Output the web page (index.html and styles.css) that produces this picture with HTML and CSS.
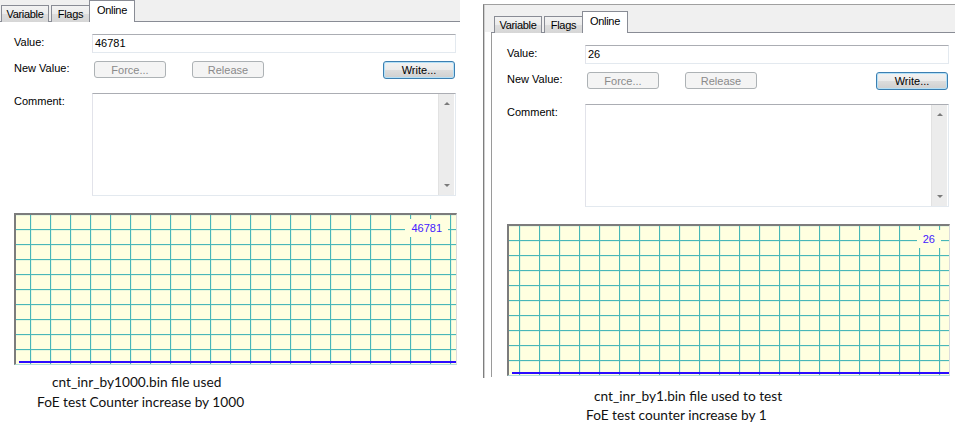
FILE: index.html
```html
<!DOCTYPE html>
<html>
<head>
<meta charset="utf-8">
<title>Online</title>
<link rel="stylesheet" href="styles.css">
</head>
<body>
<div class="page">
  <section class="col col-left">
    <div class="panel panel-cropped">
      <div class="tabstrip">
        <div class="tab tab-var">Variable</div>
        <div class="tab tab-flags">Flags</div>
        <div class="tab tab-online active">Online</div>
      </div>
      <div class="body">
        <div class="row row-value">
          <div class="lbl">Value:</div>
          <div class="field">46781</div>
        </div>
        <div class="row row-new">
          <div class="lbl">New Value:</div>
          <div class="btnrow">
            <button class="btn" disabled>Force...</button>
            <button class="btn btn-release" disabled>Release</button>
            <button class="btn btn-write">Write...</button>
          </div>
        </div>
        <div class="row row-comment">
          <div class="lbl">Comment:</div>
          <div class="comment">
            <div class="scroll"><span class="arr arr-up"></span><span class="arr arr-down"></span></div>
          </div>
        </div>
        <div class="graph graph-a">
          <div class="gval">46781</div>
          <div class="trace"></div>
        </div>
      </div>
    </div>
    <div class="caption cap-left">
      <p class="c1">cnt_inr_by1000.bin file used</p>
      <p class="c2">FoE test Counter increase by 1000</p>
    </div>
  </section>

  <section class="col col-right">
    <div class="frame">
      <div class="panel">
        <div class="tabstrip">
          <div class="tab tab-var">Variable</div>
          <div class="tab tab-flags">Flags</div>
          <div class="tab tab-online active">Online</div>
        </div>
        <div class="body">
          <div class="row row-value">
            <div class="lbl">Value:</div>
            <div class="field">26</div>
          </div>
          <div class="row row-new">
            <div class="lbl">New Value:</div>
            <div class="btnrow">
              <button class="btn" disabled>Force...</button>
              <button class="btn btn-release" disabled>Release</button>
              <button class="btn btn-write">Write...</button>
            </div>
          </div>
          <div class="row row-comment">
            <div class="lbl">Comment:</div>
            <div class="comment">
              <div class="scroll"><span class="arr arr-up"></span><span class="arr arr-down"></span></div>
            </div>
          </div>
          <div class="graph graph-b">
            <div class="gval">26</div>
            <div class="trace"></div>
          </div>
        </div>
      </div>
    </div>
    <div class="caption cap-right">
      <p class="c1">cnt_inr_by1.bin file used to test</p>
      <p class="c2">FoE test counter increase by 1</p>
    </div>
  </section>
</div>
</body>
</html>
```

FILE: styles.css
```css
* { box-sizing: border-box; }
html, body { margin: 0; padding: 0; background: #fff; }
body {
  width: 955px;
  height: 425px;
  overflow: hidden;
  font-family: "Liberation Sans", Arial, sans-serif;
  font-size: 11px;
  color: #000;
}
.page { display: flex; align-items: flex-start; }
.col { flex: none; }
.col-left { width: 462px; margin-left: -2px; overflow: hidden; }
.col-right { width: 472px; margin-left: 23px; }

/* right window frame */
.frame {
  margin-top: 4px;
  border-top: 1px solid #a0a0a0;
  border-left: 1px solid #7e7e7e;
  box-shadow: inset 1px 0 0 #cfcfcf;
  padding: 6px 0 1px 7px;
  background: linear-gradient(#f0f0f0 27px, #fff 27px);
}

/* tabs */
.tabstrip {
  height: 22px;
  background: #f0f0f0;
  border-bottom: 1px solid #898c95;
  display: flex;
  align-items: flex-end;
  padding-left: 3px;
}
.tab {
  height: 17px;
  margin-bottom: -1px;
  border: 1px solid #898c95;
  border-bottom: none;
  background: linear-gradient(#f3f3f3, #ebebeb 50%, #dddddd 51%, #d6d6d6);
  text-align: center;
  line-height: 16px;
  letter-spacing: -0.3px;
  color: #000;
}
.tab-var { width: 48px; }
.tab-flags { width: 39px; margin-left: 2px; }
.tab-online { width: 46px; margin-left: -1px; }
.tab.active {
  height: 22px;
  background: #fff;
  line-height: 19px;
  position: relative;
}

/* body */
.body {
  border-left: 1px solid #9a9a9a;
  padding: 12px 0 1px 15px;
}
.panel-cropped .body { border-left-color: transparent; }
.row { display: flex; }
.lbl { width: 78px; flex: none; line-height: 13px; }
.row-value { height: 19px; }
.row-value .lbl { padding-top: 2px; }
.row-new { height: 17px; margin-top: 8px; }
.row-new .lbl { padding-top: 1px; }
.row-comment { height: 103px; margin-top: 15px; }
.row-comment .lbl { padding-top: 2px; }

.field {
  width: 364px;
  height: 19px;
  border: 1px solid #e3e9ef;
  border-top-color: #abadb3;
  border-left-color: #e2e3ea;
  padding: 0 2px;
  line-height: 17px;
  font-size: 11px;
}

.btnrow { width: 364px; display: flex; padding-left: 2px; }
.btn {
  width: 72px;
  height: 17px;
  padding: 0;
  margin: 0;
  border: 1px solid #adb2b5;
  border-radius: 3px;
  background: #f4f4f4;
  color: #8a8a8a;
  font-family: "Liberation Sans", Arial, sans-serif;
  font-size: 11px;
  line-height: 14px;
}
.btn-release { margin-left: 26px; }
.btn-write {
  margin-left: auto;
  margin-right: 1px;
  height: 18px;
  border-color: #3c7fb1;
  color: #000;
  background: linear-gradient(#f2f2f2, #ebebeb 50%, #dddddd 51%, #cfcfcf);
  box-shadow: inset 0 0 0 1px #b4e0f7;
}

.comment {
  width: 364px;
  height: 103px;
  border: 1px solid #e3e9ef;
  border-top-color: #abadb3;
  border-left-color: #e2e3ea;
  display: flex;
  justify-content: flex-end;
}
.scroll {
  width: 16px;
  margin-right: 1px;
  background: #ececec;
  border-left: 1px solid #e2e2e2;
  display: flex;
  flex-direction: column;
  justify-content: space-between;
  align-items: center;
  padding: 8px 0 8px;
}
.arr { width: 0; height: 0; border-left: 3px solid transparent; border-right: 3px solid transparent; }
.arr-up { border-bottom: 3px solid #7a7a7a; }
.arr-down { border-top: 3px solid #7a7a7a; }

/* graph */
.graph {
  position: relative;
  margin-top: 17px;
  width: 443px;
  height: 152px;
  border-top: 2px solid #7c7c7c;
  border-left: 2px solid #7c7c7c;
  border-right: 1px solid #dcdcdc;
  border-bottom: 1px solid #b4dcdc;
  background-color: #ffffe0;
  background-image:
    linear-gradient(to right, #48b6b8 1px, rgba(120, 200, 200, 0.35) 1px, transparent 2px),
    linear-gradient(to bottom, #48b6b8 1px, rgba(120, 200, 200, 0.35) 1px, transparent 2px);
  background-size: 20px 15px;
  background-position: 14px 14px;
  display: flex;
  flex-direction: column;
  justify-content: flex-end;
}
.graph-b { background-position: 10px 14px; }
.gval {
  position: absolute;
  top: 4px;
  right: 8px;
  padding: 2px 6px;
  line-height: 14px;
  background: #ffffe0;
  color: #4320ff;
  font-size: 11px;
}
.trace {
  height: 2px;
  margin: 0 0 1px 3px;
  background: #2b0bff;
}

/* captions */
.caption {
  font-family: Lato, "Open Sans", sans-serif;
  font-size: 13.7px;
  color: #111;
}
.caption p { margin: 0; white-space: nowrap; }
.cap-left { margin-top: 6px; line-height: 20px; }
.cap-left .c1 { padding-left: 54px; }
.cap-left .c2 { padding-left: 39px; }
.cap-right { margin-top: 8px; line-height: 19px; }
.cap-right .c1 { padding-left: 111px; }
.cap-right .c2 { padding-left: 103px; }
```
